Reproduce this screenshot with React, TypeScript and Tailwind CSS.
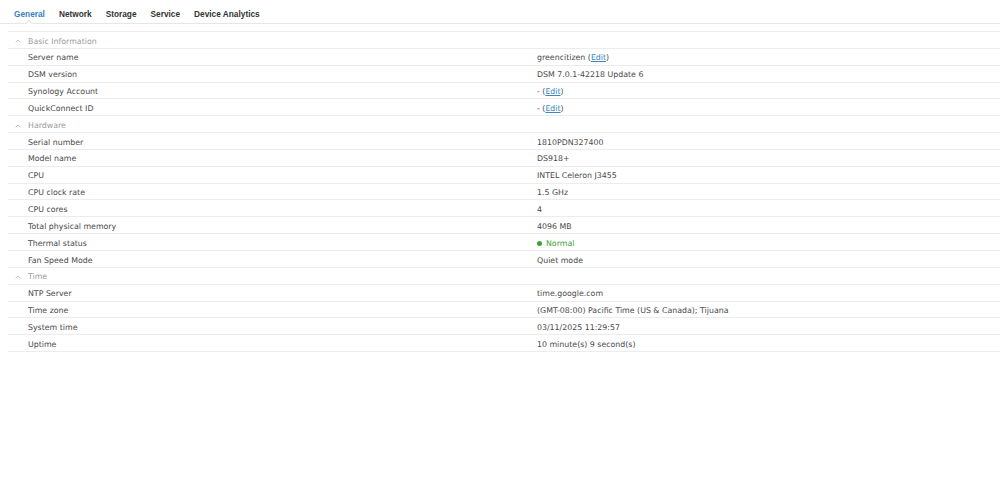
import { ChevronUp } from 'lucide-react'

type Row = { label: string; value: React.ReactNode }
type Section = { title: string; rows: Row[] }

function EditLink() {
    return (
        <>
            {' ('}
            <a href="#" className="text-[#3a86c8] underline">Edit</a>
            {')'}
        </>
    )
}

const SECTIONS: Section[] = [
    {
        title: 'Basic Information',
        rows: [
            { label: 'Server name', value: <>greencitizen<EditLink /></> },
            { label: 'DSM version', value: 'DSM 7.0.1-42218 Update 6' },
            { label: 'Synology Account', value: <>-<EditLink /></> },
            { label: 'QuickConnect ID', value: <>-<EditLink /></> },
        ],
    },
    {
        title: 'Hardware',
        rows: [
            { label: 'Serial number', value: '1810PDN327400' },
            { label: 'Model name', value: 'DS918+' },
            { label: 'CPU', value: 'INTEL Celeron J3455' },
            { label: 'CPU clock rate', value: '1.5 GHz' },
            { label: 'CPU cores', value: '4' },
            { label: 'Total physical memory', value: '4096 MB' },
            {
                label: 'Thermal status',
                value: (
                    <span className="flex items-center gap-[4px] text-[#3aa13a]">
                        <span className="h-[5px] w-[5px] rounded-full bg-[#3aa13a]" />
                        Normal
                    </span>
                ),
            },
            { label: 'Fan Speed Mode', value: 'Quiet mode' },
        ],
    },
    {
        title: 'Time',
        rows: [
            { label: 'NTP Server', value: 'time.google.com' },
            { label: 'Time zone', value: '(GMT-08:00) Pacific Time (US & Canada); Tijuana' },
            { label: 'System time', value: '03/11/2025 11:29:57' },
            { label: 'Uptime', value: '10 minute(s) 9 second(s)' },
        ],
    },
]

const TABS = ['General', 'Network', 'Storage', 'Service', 'Device Analytics']

export default function App() {
    return (
        <div className="h-[485px] w-[1000px] bg-white font-['DejaVu_Sans',sans-serif] text-[7.85px] text-[#4a4a4a]">
            {/* tab bar */}
            <div className="relative flex h-[24px] items-center gap-[14px] border-b border-[#e6e6e6] pl-[14px] pt-[5px]">
                {TABS.map((tab, i) => (
                    <span
                        key={tab}
                        className={`font-['Liberation_Sans',sans-serif] text-[8.3px] font-bold ${i === 0 ? 'text-[#3a7ebf]' : 'text-[#333]'}`}
                    >
                        {tab}
                    </span>
                ))}
                <span className="absolute bottom-[-1px] left-[25px] h-[4px] w-[8px] overflow-hidden">
                    <span className="absolute left-[1px] top-[1px] h-[6px] w-[6px] rotate-45 border-l border-t border-[#e6e6e6] bg-white" />
                </span>
            </div>

            {/* content */}
            <div className="ml-[8px] mt-[7px] border-b border-[#ececec]">
                {SECTIONS.map((section) => (
                    <div key={section.title}>
                        <div className="flex h-[16.85px] items-center border-t border-[#ececec] pt-[3px] text-[#9c9c9c]">
                            <ChevronUp className="ml-[6px] h-[8px] w-[8px]" strokeWidth={1.75} />
                            <span className="ml-[6px]">{section.title}</span>
                        </div>
                        {section.rows.map((row) => (
                            <div key={row.label} className="flex h-[16.85px] items-center border-t border-[#ececec] pt-[3px]">
                                <span className="w-[529px] pl-[20px]">{row.label}</span>
                                <span className="flex items-center">{row.value}</span>
                            </div>
                        ))}
                    </div>
                ))}
            </div>
        </div>
    )
}
